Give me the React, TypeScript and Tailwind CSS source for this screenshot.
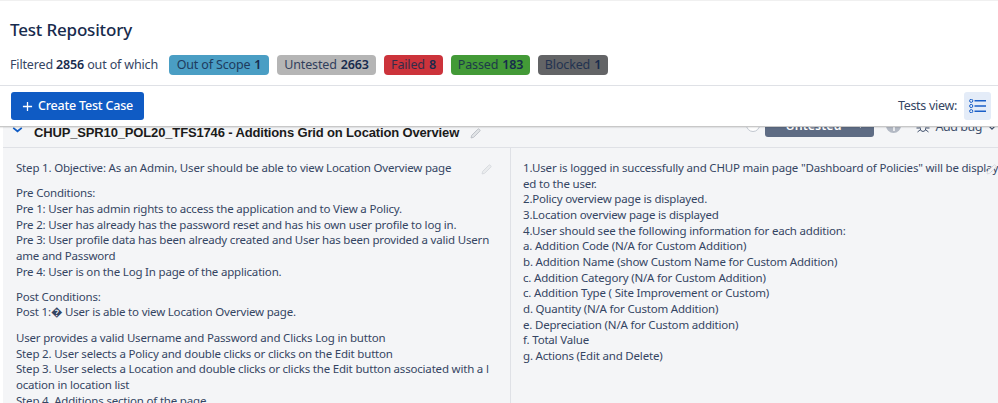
import React from "react";

function Pencil({ className, solid }: { className?: string; solid?: boolean }) {
  return (
    <svg viewBox="0 0 16 16" className={className} fill="none">
      <path
        d="M2.5 13.5l.8-3.2 7.6-7.6a1.2 1.2 0 0 1 1.7 0l.7.7a1.2 1.2 0 0 1 0 1.7l-7.6 7.6-3.2.8z"
        fill={solid ? "#f4f5f7" : "currentColor"}
        fillOpacity={solid ? 1 : 0.3}
        stroke="currentColor"
        strokeWidth="1"
        strokeLinejoin="round"
      />
    </svg>
  );
}

function Badge({ label, n, cls }: { label: string; n: string; cls: string }) {
  return (
    <span className={`flex h-5 items-center justify-center rounded-[4px] text-[12.5px] tracking-[-0.15px] text-[#172b4d] ${cls}`}>
      <span className="opacity-85">{label}</span>
      <b className="ml-1 font-semibold">{n}</b>
    </span>
  );
}

const left1 = [
  "Pre Conditions:",
  "Pre 1: User has admin rights to access the application and to View a Policy.",
  "Pre 2: User has already has the password reset and has his own user profile to log in.",
  "Pre 3: User profile data has been already created and User has been provided a valid Usern",
  "ame and Password",
  "Pre 4: User is on the Log In page of the application.",
];
const left2 = ["Post Conditions:", "Post 1:\uFFFD User is able to view Location Overview page."];
const left3 = [
  "User provides a valid Username and Password and Clicks Log in button",
  "Step 2. User selects a Policy and double clicks or clicks on the Edit button",
  "Step 3. User selects a Location and double clicks or clicks the Edit button associated with a l",
  "ocation in location list",
  "Step 4. Additions section of the page",
];
const right = [
  '1.User is logged in successfully and CHUP main page "Dashboard of Policies" will be display',
  "ed to the user.",
  "2.Policy overview page is displayed.",
  "3.Location overview page is displayed",
  "4.User should see the following information for each addition:",
  "a. Addition Code (N/A for Custom Addition)",
  "b. Addition Name (show Custom Name for Custom Addition)",
  "c. Addition Category (N/A for Custom Addition)",
  "c. Addition Type ( Site Improvement or Custom)",
  "d. Quantity (N/A for Custom Addition)",
  "e. Depreciation (N/A for Custom addition)",
  "f. Total Value",
  "g. Actions (Edit and Delete)",
];

function Lines({ items, className = "" }: { items: string[]; className?: string }) {
  return (
    <div className={className}>
      {items.map((t) => (
        <div key={t} className="whitespace-pre">{t}</div>
      ))}
    </div>
  );
}

export default function App() {
  return (
    <div className="flex h-[403px] w-[998px] flex-col overflow-hidden bg-white font-['Noto_Sans',sans-serif] text-[#344563]">
      <header className="h-[86px] shrink-0 border-t border-b border-t-[#f0f0f0] border-b-[#dfe1e6] px-[10px]">
        <h1 className="mt-[18px] text-[17px] leading-[22px] font-medium tracking-[-0.18px] text-[#172b4d]">Test Repository</h1>
        <div className="mt-[14px] flex items-center text-[12.5px] tracking-[-0.15px]">
          <span className="w-[159px] shrink-0 text-[#344563]">
            Filtered <b className="font-semibold text-[#172b4d]">2856</b> out of which
          </span>
          <div className="flex gap-[8px]">
            <Badge label="Out of Scope" n="1" cls="w-[100px] bg-[#4a9ec4]" />
            <Badge label="Untested" n="2663" cls="w-[99px] bg-[#b5b5b5]" />
            <Badge label="Failed" n="8" cls="w-[59px] bg-[#cc333b]" />
            <Badge label="Passed" n="183" cls="w-[79px] bg-[#439a37]" />
            <Badge label="Blocked" n="1" cls="w-[70px] bg-[#636466]" />
          </div>
        </div>
      </header>

      <div className="z-10 flex h-[41px] shrink-0 items-center justify-between border-b border-[#c8c8c8] bg-white pr-[7px] pl-[11px] shadow-[0_1px_1px_rgba(0,0,0,0.08)]">
        <button className="flex h-[28px] w-[133px] items-center justify-center gap-[5px] rounded-[3px] bg-[#0f5bc4] text-[12.5px] font-medium tracking-[-0.2px] text-white">
          <svg viewBox="0 0 12 12" className="h-[11px] w-[11px]" stroke="currentColor" strokeWidth="1.4">
            <path d="M6 1v10M1 6h10" />
          </svg>
          Create Test Case
        </button>
        <div className="flex items-center gap-[7px]">
          <span className="text-[12.5px] tracking-[-0.3px] text-[#344563]">Tests view:</span>
          <span className="flex h-[28px] w-[27px] items-center justify-center rounded-[3px] bg-[#e4ecf8] text-[#1a5fc8]">
            <svg viewBox="0 0 17 14" className="h-[14px] w-[17px]" fill="none" stroke="currentColor">
              <circle cx="2.2" cy="1.8" r="1.6" />
              <circle cx="2.2" cy="7" r="1.6" />
              <circle cx="2.2" cy="12.2" r="1.6" />
              <path d="M5.5 1.8h11.5M5.5 7h11.5M5.5 12.2h11.5" strokeWidth="1.6" />
            </svg>
          </span>
        </div>
      </div>

      <main className="ml-[3px] flex min-h-0 flex-1 flex-col overflow-hidden bg-[#f4f5f7]">
        <div className="flex h-[21px] shrink-0 items-start overflow-hidden border-b border-[#dfe1e6] pr-[2px] pl-[9px]">
          <svg viewBox="0 0 12 7" className="h-[6px] w-[11px] shrink-0 text-[#0f5bc4]" fill="none" stroke="currentColor" strokeWidth="2">
            <path d="M1 1l5 4 5-4" />
          </svg>
          <span className="mt-[-1px] ml-[11px] font-['Liberation_Sans',sans-serif] text-[13px] leading-[14px] font-bold tracking-[-0.15px] whitespace-pre text-[#1b1b1b]">
            CHUP_SPR10_POL20_TFS1746 - Additions Grid on Location Overview
          </span>
          <Pencil className="mt-[0px] ml-[10px] h-[13px] w-[13px] shrink-0 text-[#b4b8bf]" />
          <div className="ml-auto flex items-start">
            <span className="mt-[-9px] h-[14px] w-[14px] rounded-full border border-[#c1c7d0] bg-white" />
            <span className="mt-[-13px] ml-[5px] flex h-[23px] w-[109px] items-end justify-between rounded-[3px] bg-[#5e6c84] pr-[10px] pb-[4px] pl-[20px] text-[12.5px] leading-[14px] font-semibold text-white">
              Untested
              <svg viewBox="0 0 10 6" className="mb-[5px] h-[4px] w-[7px]" fill="none" stroke="currentColor" strokeWidth="1.5">
                <path d="M1 1l4 4 4-4" />
              </svg>
            </span>
            <span className="mt-[-9px] ml-[12px] flex h-[15px] w-[15px] items-end justify-center rounded-full bg-[#b3b9c4] pb-[2px]">
              <span className="h-[6px] w-[2px] bg-[#e8eaee]" />
            </span>
            <span className="mt-[-7px] ml-[15px] flex items-center whitespace-pre text-[12.5px] leading-[14px] tracking-[-0.45px] text-[#42526e]">
              <svg viewBox="0 0 14 12" className="mr-[5px] h-[12px] w-[14px]" fill="none" stroke="currentColor">
                <ellipse cx="7" cy="6.5" rx="3" ry="4" />
                <path d="M1 3l3 2M13 3l-3 2M0.5 7h3M13.5 7h-3M1.5 11l2.500-2M12.500 11l-2.500-2" />
              </svg>
              Add bug
              <svg viewBox="0 0 10 6" className="ml-[6px] h-[5px] w-[8px]" fill="none" stroke="currentColor" strokeWidth="1.5">
                <path d="M1 1l4 4 4-4" />
              </svg>
            </span>
          </div>
        </div>

        <div className="flex min-h-0 flex-1 text-[11.5px] leading-[15.67px] tracking-[-0.19px]">
          <div className="relative w-[508px] shrink-0 border-r border-[#dfe1e6] pt-[12px] pl-[13px] text-[#344563]">
            <div>Step 1. Objective: As an Admin, User should be able to view Location Overview page</div>
            <Lines items={left1} className="mt-[9.5px]" />
            <Lines items={left2} className="mt-[9.5px]" />
            <Lines items={left3} className="mt-[10px]" />
            <Pencil className="absolute top-[15px] right-[17px] h-[13px] w-[13px] text-[#d3d6db]" />
          </div>
          <div className="relative min-w-0 flex-1 pt-[12px] pl-[12px] text-[#344563]">
            <Lines items={right} />
            <Pencil solid className="absolute top-[15px] right-[0px] h-[13px] w-[13px] text-[#d3d6db]" />
          </div>
        </div>
      </main>
    </div>
  );
}
